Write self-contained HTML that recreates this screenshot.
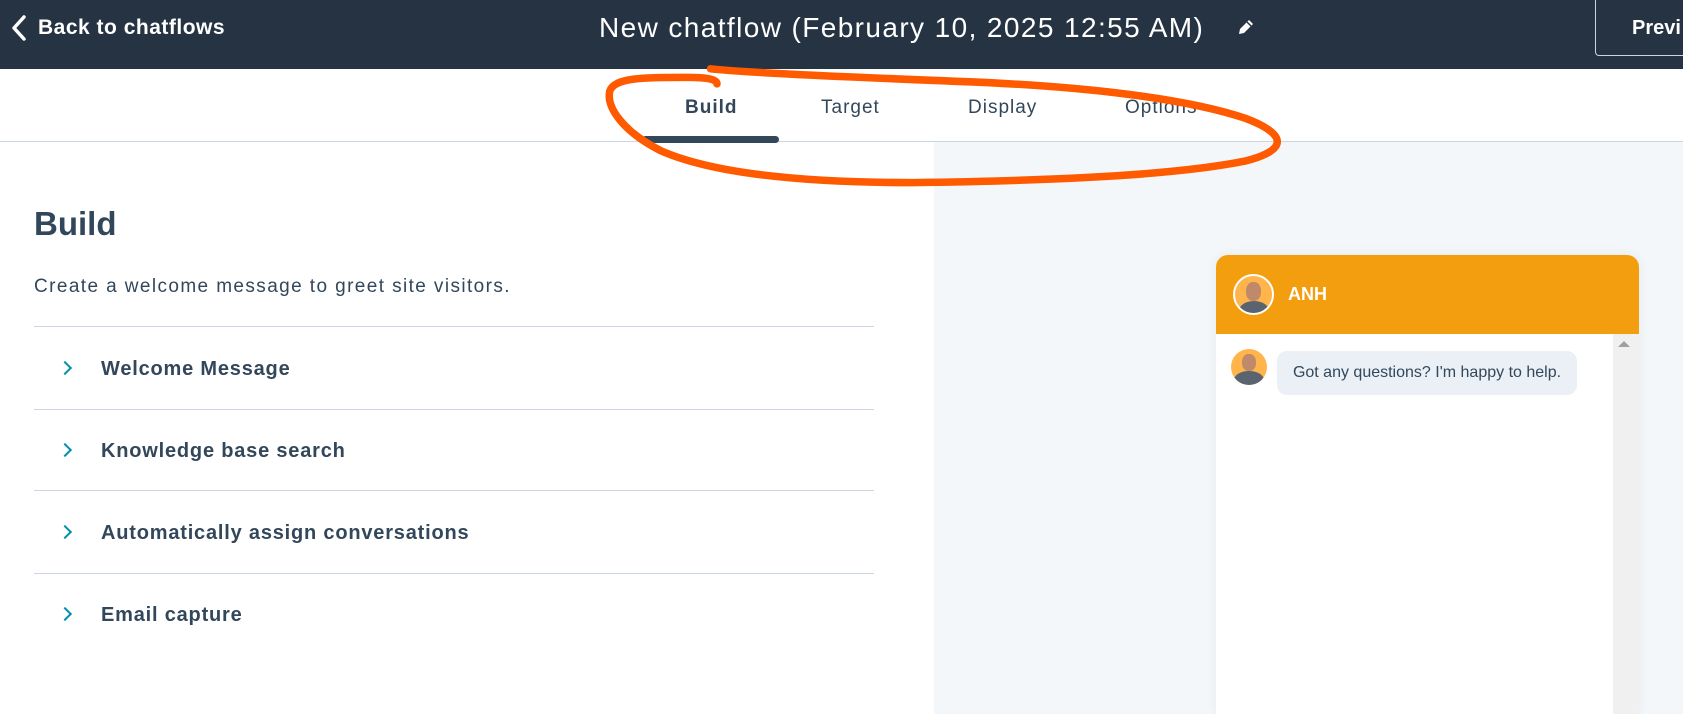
<!DOCTYPE html>
<html style="overflow:hidden;height:714px"><head><meta charset="utf-8"><style>
*{margin:0;padding:0;box-sizing:border-box}
body{width:1683px;height:714px;overflow:hidden;background:#fff;font-family:"Liberation Sans",sans-serif;color:#33475b;position:relative}
.hdr{position:absolute;left:0;top:0;width:1683px;height:69px;background:#253342;color:#fff}
.abs{position:absolute;white-space:nowrap}
.tab{position:absolute;top:97px;font-size:19px;color:#33475b;letter-spacing:1px}
.item{position:absolute;left:101px;font-size:20px;font-weight:bold;color:#33475b;letter-spacing:0.8px}
.chev{position:absolute;left:60px;width:10px;height:10px;border-right:2.5px solid #0091ae;border-top:2.5px solid #0091ae;transform:rotate(45deg)}
.line{position:absolute;left:34px;width:840px;height:1px;background:#cbd6e2}
</style></head><body>
<div class="hdr">
  <svg class="abs" style="left:10px;top:14px" width="18" height="28" viewBox="0 0 18 28"><path d="M14 3 L4 14 L14 25" stroke="#fff" stroke-width="3.5" fill="none" stroke-linecap="round" stroke-linejoin="round"/></svg>
  <div class="abs" style="left:38px;top:16px;font-size:21px;font-weight:bold;letter-spacing:0.5px">Back to chatflows</div>
  <div class="abs" style="left:599px;top:12px;font-size:28px;letter-spacing:1.4px">New chatflow (February 10, 2025 12:55 AM)</div>
  <svg class="abs" style="left:1235px;top:16px" width="22" height="22" viewBox="0 0 22 22"><path d="M4 18 L5 13 L14 4 L18 8 L9 17 Z" fill="#fff"/><path d="M12 6 L16 10" stroke="#253342" stroke-width="1.5"/></svg>
  <div class="abs" style="left:1595px;top:0;width:120px;height:56px;border:1px solid #cbd6e2;border-top:none;border-radius:0 0 0 4px"></div>
  <div class="abs" style="left:1632px;top:17px;font-size:20px;font-weight:bold">Previ</div>
</div>
<div class="tab" style="left:685px;font-weight:bold">Build</div>
<div class="tab" style="left:821px">Target</div>
<div class="tab" style="left:968px">Display</div>
<div class="tab" style="left:1125px">Options</div>
<div class="abs" style="left:0;top:141px;width:1683px;height:1px;background:#cbd6e2"></div>
<div class="abs" style="left:642px;top:136px;width:137px;height:7px;background:#33475b;border-radius:4px"></div>
<div class="abs" style="left:934px;top:142px;width:749px;height:572px;background:#f4f7fa"></div>

<div class="abs" style="left:34px;top:205px;font-size:33px;font-weight:bold;color:#33475b">Build</div>
<div class="abs" style="left:34px;top:276px;font-size:19px;letter-spacing:1.4px">Create a welcome message to greet site visitors.</div>
<div class="line" style="top:326px"></div>
<div class="line" style="top:409px"></div>
<div class="line" style="top:490px"></div>
<div class="line" style="top:573px"></div>
<div class="chev" style="top:363px"></div><div class="item" style="top:358px">Welcome Message</div>
<div class="chev" style="top:445px"></div><div class="item" style="top:440px">Knowledge base search</div>
<div class="chev" style="top:527px"></div><div class="item" style="top:522px">Automatically assign conversations</div>
<div class="chev" style="top:609px"></div><div class="item" style="top:604px">Email capture</div>

<div class="abs" style="left:1216px;top:255px;width:423px;height:459px;background:#fff;border-radius:12px 12px 0 0;box-shadow:0 0 12px rgba(0,0,0,.06);overflow:hidden">
  <div style="position:absolute;left:0;top:0;width:423px;height:79px;background:#f39e0e"></div>
  <div style="position:absolute;left:397px;top:79px;width:26px;height:380px;background:#f0f0f0"></div>
  <div style="position:absolute;left:402px;top:86px;width:0;height:0;border-left:6px solid transparent;border-right:6px solid transparent;border-bottom:6px solid #a0a0a0"></div>
  <div style="position:absolute;left:17px;top:19px;width:41px;height:41px;border-radius:50%;background:#ffb54c;border:2px solid #fff;overflow:hidden"><div style="position:absolute;left:11px;top:6px;width:15px;height:19px;border-radius:45%;background:#c08a6a"></div><div style="position:absolute;left:4px;top:25px;width:30px;height:20px;border-radius:50% 50% 0 0;background:#5a6470"></div></div>
  <div style="position:absolute;left:72px;top:29px;font-size:18px;font-weight:bold;color:#fff">ANH</div>
  <div style="position:absolute;left:15px;top:94px;width:36px;height:36px;border-radius:50%;background:#ffb54c;overflow:hidden"><div style="position:absolute;left:11px;top:5px;width:14px;height:17px;border-radius:45%;background:#c08a6a"></div><div style="position:absolute;left:3px;top:22px;width:30px;height:18px;border-radius:50% 50% 0 0;background:#5a6470"></div></div>
  <div style="position:absolute;left:61px;top:96px;width:300px;height:44px;border-radius:10px;background:#eaf0f6;font-size:16px;color:#33475b;line-height:44px;text-align:center">Got any questions? I'm happy to help.</div>
</div>

<svg class="abs" style="left:0;top:0" width="1683" height="714" viewBox="0 0 1568 665"><path d="M662 64 C700 68 800 72 900 76 C1000 80 1100 90 1160 110 C1200 125 1200 140 1160 150 C1100 162 1000 168 850 170 C740 170 660 160 615 140 C580 122 565 100 568 85 C572 72 600 72 640 72 C660 72 668 74 668 78" stroke="#ff5a00" stroke-width="7" fill="none" stroke-linecap="round" stroke-linejoin="round"/></svg>
</body></html>
